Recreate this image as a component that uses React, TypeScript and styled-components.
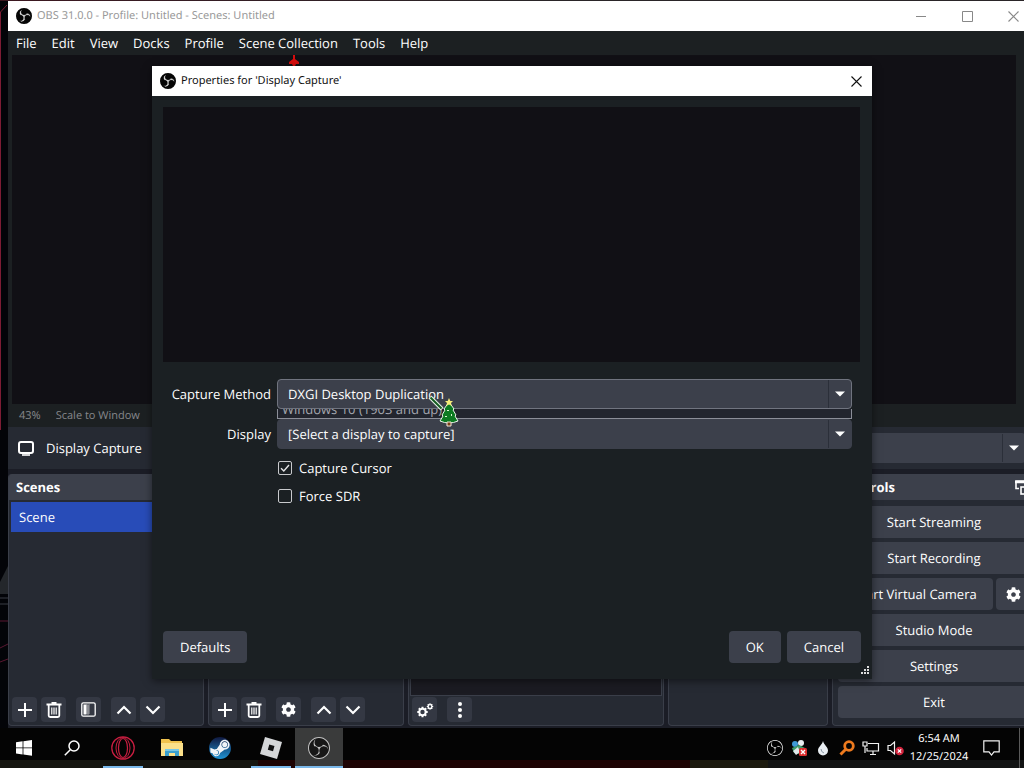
import React from "react";
import styled, { createGlobalStyle } from "styled-components";
import { FaCog, FaSteamSymbol } from "react-icons/fa";
import { SiObsstudio } from "react-icons/si";

const Global = createGlobalStyle`
  * { box-sizing: border-box; }
  body { margin: 0; background: #000; overflow: hidden; text-rendering: geometricPrecision; }
  button, select, input { font: inherit; color: inherit; margin: 0; text-rendering: inherit; }
  button { border: 0; padding: 0; background: none; }
`;

const ui = `"Open Sans", "Noto Sans", sans-serif`;

const Screen = styled.div`
  height: 100vh;
  display: flex;
  flex-direction: column;
  overflow: hidden;
  background: #05060a;
  color: #fefefe;
  font-family: ${ui};
  font-size: 13px;
  line-height: 18px;
`;

const Desktop = styled.div`
  position: relative;
  flex: 1;
  min-height: 0;
  display: flex;
  padding: 1px 0 0 8px;
  background: linear-gradient(90deg, #3c1720, #2a2528 50%) top / 100% 1px no-repeat, #030408;
`;

const Wallpaper = styled.svg`
  position: absolute;
  left: 0;
  top: 0;
  width: 8px;
  height: 100%;
`;

const MainWindow = styled.main`
  flex: 1;
  display: flex;
  flex-direction: column;
  margin-right: -12px;
  background: #1c2022;
`;

const TitleBar = styled.header<{ $active?: boolean }>`
  flex: none;
  height: 30px;
  display: flex;
  align-items: center;
  gap: 5px;
  padding-left: 8px;
  background: #fff;
  color: ${(p) => (p.$active ? "#111" : "#999")};
  font-family: "Noto Sans", sans-serif;
  font-size: 11px;
`;

const WindowTitle = styled.h1`
  flex: 1;
  margin: 0;
  font-size: inherit;
  font-weight: 400;
`;

const CaptionButton = styled.button<{ $w?: number }>`
  width: ${(p) => p.$w ?? 46}px;
  height: 30px;
  display: grid;
  place-items: center;
`;

const CaptionGroup = styled.div`
  display: flex;
`;

const MenuBar = styled.nav`
  flex: none;
  height: 24px;
  display: flex;
  align-items: center;
  gap: 15px;
  padding-left: 8px;
`;

const MenuItem = styled.button``;

const Preview = styled.div`
  flex: 1;
  min-height: 0;
  margin: 0 20px 0 4px;
  background: #111015;
`;

const ZoomRow = styled.div`
  flex: none;
  height: 23px;
  display: flex;
  align-items: center;
  gap: 15px;
  padding-left: 11px;
  color: #85878b;
  font-size: 11px;
`;

const SourceBar = styled.div`
  flex: none;
  height: 42px;
  display: flex;
  align-items: center;
  gap: 12px;
  padding: 0 10px;
  background: #262a33;
`;

const SourceName = styled.span`
  flex: 1;
`;

const Docks = styled.div`
  flex: none;
  display: grid;
  grid-template-columns: 196px 196px 256px 160px 1fr;
  gap: 4px;
  padding: 5px 0 2px;
  background: #1b1d26;
`;

const Dock = styled.section`
  display: flex;
  flex-direction: column;
  border: 1px solid #3a3e49;
  border-top: 0;
  border-radius: 4px;
  overflow: hidden;
  background: #262a33;
`;

const DockHeader = styled.h2`
  flex: none;
  height: 26px;
  display: flex;
  align-items: center;
  justify-content: space-between;
  margin: 0;
  padding: 0 5px 0 7px;
  background: #3c404b;
  font-size: 13px;
  font-weight: 700;
`;

const DockBody = styled.div`
  flex: 1;
  padding: 2px;
`;

const MixerBody = styled.div`
  flex: 1;
  margin: 0 1px -2px;
  border: 1px solid #3a3e49;
  border-top: 0;
  background: #1b1b22;
`;

const SceneItem = styled.button`
  width: 100%;
  height: 30px;
  padding-left: 8px;
  text-align: left;
  background: #284cb8;
`;

const DockTools = styled.div`
  flex: none;
  display: flex;
  gap: 10px;
  padding: 3px 4px 3px 3px;
`;

const ToolGroup = styled.div`
  display: flex;
  gap: 4px;
`;

const ToolButton = styled.button`
  width: 25px;
  height: 25px;
  display: grid;
  place-items: center;
  border-radius: 4px;
  background: #343843;
`;

const Controls = styled.div`
  display: grid;
  gap: 4px;
  padding: 6px 5px 7px;
`;

const ControlRow = styled.div`
  display: grid;
  grid-template-columns: 1fr 34px;
  gap: 3px;
`;

const PushButton = styled.button<{ $pad?: number }>`
  height: 32px;
  padding: 0 ${(p) => p.$pad ?? 0}px;
  display: flex;
  align-items: center;
  justify-content: center;
  border-radius: 4px;
  background: #3c404b;
  white-space: nowrap;
`;

const Dialog = styled.section`
  position: absolute;
  left: 152px;
  right: 152px;
  top: 66px;
  bottom: 49px;
  display: flex;
  flex-direction: column;
  background: #1b2023;
  box-shadow: 0 2px 8px rgba(0, 0, 0, 0.5);
`;

const DialogBody = styled.div`
  flex: 1;
  display: flex;
  flex-direction: column;
  padding: 11px 11px 16px;
`;

const SourcePreview = styled.div`
  flex: none;
  height: 255px;
  margin-right: 1px;
  background: #111015;
`;

const Form = styled.form`
  flex: 1;
  display: grid;
  grid-template-columns: 108px 1fr;
  grid-auto-rows: 30px;
  align-content: start;
  align-items: center;
  column-gap: 6px;
  row-gap: 10px;
  padding: 17px 9px 0 0;
`;

const FieldLabel = styled.label`
  text-align: right;
`;

const Field = styled.div`
  position: relative;
`;

const Combo = styled.span<{ $focus?: boolean }>`
  display: flex;
  align-items: center;
  width: 100%;
  height: 30px;
  border: 1px solid ${(p) => (p.$focus ? "#70747f" : "#3c404b")};
  border-radius: 4px;
  background: #3c404b;
`;

const ComboSelect = styled.select`
  flex: 1;
  height: 100%;
  padding: 0 10px;
  border: 0;
  outline: 0;
  appearance: none;
  background: transparent;
`;

const ComboArrow = styled.span`
  width: 23px;
  height: 100%;
  display: grid;
  place-items: center;
  border-left: 1px solid #2b2f39;
  pointer-events: none;
`;

const Popup = styled.div`
  position: absolute;
  left: 0;
  right: 0;
  top: 30px;
  height: 10px;
  display: flex;
  align-items: flex-end;
  overflow: hidden;
  padding-left: 4px;
  border: 1px solid #8b8e98;
  border-top: 0;
  background: #22252e;
  color: #a4a7af;
`;

const Checks = styled.div`
  grid-column: 2;
  display: grid;
  gap: 10px;
  align-self: start;
`;

const CheckLabel = styled.label`
  display: flex;
  align-items: center;
  gap: 7px;
  padding-left: 1px;
`;

const CheckBox = styled.input`
  appearance: none;
  width: 14px;
  height: 14px;
  border: 1px solid #c9cacd;
  border-radius: 2px;
  &:checked {
    background: url("data:image/svg+xml,%3Csvg xmlns='http://www.w3.org/2000/svg' viewBox='0 0 12 12'%3E%3Cpath d='M2 6.2 4.8 9 10 3' fill='none' stroke='%23e4e4e6' stroke-width='1.4'/%3E%3C/svg%3E") center / 12px no-repeat;
  }
`;

const DialogButtons = styled.footer`
  display: flex;
  gap: 6px;
`;

const Spacer = styled.span`
  flex: 1;
`;

const Grip = styled.svg`
  position: absolute;
  right: 3px;
  bottom: 5px;
`;

const Cursor = styled.svg`
  position: absolute;
  left: 428px;
  top: 394px;
`;

const Marker = styled.svg`
  position: absolute;
  left: 288px;
  top: 55px;
`;

const Taskbar = styled.footer`
  flex: none;
  height: 40px;
  display: flex;
  align-items: stretch;
  background: linear-gradient(90deg, #15150f 0 258px, #1d0303 258px 690px, #1b190d 690px 768px, #121313 768px) bottom / 100% 8px no-repeat, #040404;
`;

const Task = styled.button<{ $w: number; $line?: number; $active?: boolean }>`
  width: ${(p) => p.$w}px;
  display: grid;
  place-items: center;
  background: ${(p) => (p.$line ? `linear-gradient(#7ab8ea, #7ab8ea) bottom / ${p.$line}px 2px no-repeat` : "none")}
    ${(p) => (p.$active ? ", #3a3b3b" : "")};
`;

const Tray = styled.div`
  display: flex;
  align-items: center;
  gap: 4px;
  margin-left: auto;
  padding-right: 18px;
`;

const TrayButton = styled.button`
  width: 20px;
  height: 40px;
  display: grid;
  place-items: center;
`;

const Clock = styled.time`
  width: 60px;
  margin-right: 8px;
  text-align: center;
  white-space: nowrap;
  font-family: "Noto Sans", sans-serif;
  font-size: 11px;
  line-height: 18px;
`;

const ShowDesktop = styled.button`
  width: 5px;
  border-left: 1px solid #5a5a5a;
`;

const Obs = ({ size, disc, ink, rim }: { size: number; disc: string; ink: string; rim?: boolean }) => (
  <svg width={size} height={size} viewBox="0 0 24 24" aria-hidden>
    <circle cx="12" cy="12" r="11.500" fill={disc} />
    <SiObsstudio size={24} color={ink} stroke={ink} strokeWidth={rim ? 0.6 : 0} />
    {rim && <circle cx="12" cy="12" r="10.700" fill="none" stroke={disc} strokeWidth="2.600" />}
  </svg>
);

const Cross = ({ color }: { color: string }) => (
  <svg width="11" height="11" viewBox="0 0 11 11">
    <path d="M.5.5l10 10M10.500.5l-10 10" stroke={color} strokeWidth="1.100" />
  </svg>
);

const Plus = () => (
  <svg width="14" height="14" viewBox="0 0 14 14">
    <path d="M7 0v14M0 7h14" stroke="#fefefe" strokeWidth="2" />
  </svg>
);

const Trash = () => (
  <svg width="16" height="16" viewBox="0 0 16 16" fill="none" stroke="#fefefe">
    <path d="M.5 2.500h15M5.500 1h5" strokeWidth="2" />
    <path d="M2.700 3v10.500q0 1.500 1.500 1.500h7.600q1.500 0 1.500-1.500V3" strokeWidth="1.800" />
    <path d="M5.800 5.500v7M8 5.500v7M10.200 5.500v7" strokeWidth="1.200" />
  </svg>
);

const Filters = () => (
  <svg width="15" height="15" viewBox="0 0 15 15">
    <rect x=".8" y=".8" width="13.400" height="13.400" rx="1.500" fill="none" stroke="#fefefe" strokeWidth="1.300" />
    <path d="M2.500 2.500h3v10h-3z" fill="#fefefe" />
    <path d="M6 2.500v10M8 2.500v10" stroke="#fefefe" strokeDasharray="1 1" />
    <path d="M7 3.500v9" stroke="#fefefe" strokeDasharray="1 1" />
  </svg>
);

const Chevron = ({ up }: { up?: boolean }) => (
  <svg width="16" height="10" viewBox="0 0 16 10">
    <path d={up ? "M1.500 8.500 8 2l6.500 6.500" : "M1.500 1.500 8 8l6.500-6.500"} fill="none" stroke="#fefefe" strokeWidth="2.200" />
  </svg>
);

const Arrow = () => (
  <svg width="10" height="6" viewBox="0 0 10 6">
    <path d="M0 .5h10L5 5.500z" fill="#fefefe" />
  </svg>
);

const gearTeeth = [0, 45, 90, 135, 180, 225, 270, 315];

const Gears = () => (
  <svg width="18" height="18" viewBox="0 0 18 18" fill="none" stroke="#fefefe">
    <circle cx="6.500" cy="11" r="3.200" strokeWidth="2" />
    {gearTeeth.map((a) => (
      <path key={a} d="M6.500 5.800v2" strokeWidth="2" transform={`rotate(${a} 6.500 11)`} />
    ))}
    <circle cx="14" cy="5.500" r="1.900" strokeWidth="1.300" />
    {gearTeeth.map((a) => (
      <path key={a} d="M14 2.300v1.500" strokeWidth="1.200" transform={`rotate(${a} 14 5.500)`} />
    ))}
  </svg>
);

const Kebab = () => (
  <svg width="4" height="16" viewBox="0 0 4 16" fill="#fefefe">
    <circle cx="2" cy="2" r="2" />
    <circle cx="2" cy="8" r="2" />
    <circle cx="2" cy="14" r="2" />
  </svg>
);

const OrderButtons = () => (
  <ToolGroup>
    <ToolButton aria-label="Move up"><Chevron up /></ToolButton>
    <ToolButton aria-label="Move down"><Chevron /></ToolButton>
  </ToolGroup>
);

const AddRemove = () => (
  <ToolGroup>
    <ToolButton aria-label="Add"><Plus /></ToolButton>
    <ToolButton aria-label="Remove"><Trash /></ToolButton>
  </ToolGroup>
);

const menus = ["File", "Edit", "View", "Docks", "Profile", "Scene Collection", "Tools", "Help"];

export default function App() {
  return (
    <Screen>
      <Global />
      <Desktop>
        <Wallpaper viewBox="0 0 8 728" preserveAspectRatio="none" aria-hidden>
          <path d="M.5 430V12L7 5" fill="none" stroke="#7c1c33" />
          <path d="M0 582l8-16v28H0z" fill="#24272b" />
          <path d="M0 598h8M0 604h8" stroke="#3a3c44" />
          <path d="M0 621h8M0 648l8-4M0 662l8-3" stroke="#5a1730" />
        </Wallpaper>

        <MainWindow>
          <TitleBar>
            <Obs size={16} disc="#050505" ink="#f4f4f4" rim />
            <WindowTitle>OBS 31.0.0 - Profile: Untitled - Scenes: Untitled</WindowTitle>
            <CaptionGroup>
              <CaptionButton aria-label="Minimize">
                <svg width="10" height="1"><path d="M0 .5h10" stroke="#888" /></svg>
              </CaptionButton>
              <CaptionButton aria-label="Maximize">
                <svg width="11" height="11"><path d="M.5.5h10v10H.5z" fill="none" stroke="#888" /></svg>
              </CaptionButton>
              <CaptionButton aria-label="Close"><Cross color="#888" /></CaptionButton>
            </CaptionGroup>
          </TitleBar>
          <MenuBar>
            {menus.map((m) => <MenuItem key={m}>{m}</MenuItem>)}
          </MenuBar>
          <Preview />
          <ZoomRow>
            <span>43%</span>
            <span>Scale to Window</span>
          </ZoomRow>
          <SourceBar>
            <svg width="16" height="15" viewBox="0 0 16 15" fill="none" stroke="#fefefe">
              <rect x="1" y="1" width="14" height="11" rx="2" strokeWidth="2" />
              <path d="M4 14h8" strokeWidth="1.600" />
            </svg>
            <SourceName>Display Capture</SourceName>
            <SourceName>
              <Combo>
                <ComboSelect aria-label="Display"><option></option></ComboSelect>
                <ComboArrow><Arrow /></ComboArrow>
              </Combo>
            </SourceName>
          </SourceBar>
          <Docks>
            <Dock>
              <DockHeader>Scenes</DockHeader>
              <DockBody><SceneItem>Scene</SceneItem></DockBody>
              <DockTools>
                <AddRemove />
                <ToolButton aria-label="Filters"><Filters /></ToolButton>
                <OrderButtons />
              </DockTools>
            </Dock>
            <Dock>
              <DockHeader>Sources</DockHeader>
              <DockBody />
              <DockTools>
                <AddRemove />
                <ToolButton aria-label="Source properties"><FaCog size={15} /></ToolButton>
                <OrderButtons />
              </DockTools>
            </Dock>
            <Dock>
              <DockHeader>Audio Mixer</DockHeader>
              <MixerBody />
              <DockTools>
                <ToolButton aria-label="Advanced audio"><Gears /></ToolButton>
                <ToolButton aria-label="Mixer menu"><Kebab /></ToolButton>
              </DockTools>
            </Dock>
            <Dock>
              <DockHeader>Scene Transitions</DockHeader>
            </Dock>
            <Dock>
              <DockHeader>
                Controls
                <svg width="15" height="15" viewBox="0 0 15 15" fill="none" stroke="#fefefe">
                  <path d="M4 8.500H1V1h11v4" strokeWidth="1.600" />
                  <path d="M0 2h13" strokeWidth="2.500" />
                  <rect x="6" y="7" width="8" height="7" strokeWidth="1.600" />
                </svg>
              </DockHeader>
              <Controls>
                <PushButton>Start Streaming</PushButton>
                <PushButton>Start Recording</PushButton>
                <ControlRow>
                  <PushButton>Start Virtual Camera</PushButton>
                  <PushButton aria-label="Virtual camera settings"><FaCog size={15} /></PushButton>
                </ControlRow>
                <PushButton>Studio Mode</PushButton>
                <PushButton>Settings</PushButton>
                <PushButton>Exit</PushButton>
              </Controls>
            </Dock>
          </Docks>
        </MainWindow>

        <Marker width="12" height="11" viewBox="0 0 12 11" aria-hidden>
          <path d="M5 0h2v4l4 3v2H8l-1 2H5L4 9H1V7l4-3z" fill="#d80d0d" />
        </Marker>

        <Dialog role="dialog" aria-label="Properties for 'Display Capture'">
          <TitleBar $active>
            <Obs size={16} disc="#050505" ink="#f4f4f4" rim />
            <WindowTitle>Properties for 'Display Capture'</WindowTitle>
            <CaptionButton $w={31} aria-label="Close dialog"><Cross color="#111" /></CaptionButton>
          </TitleBar>
          <DialogBody>
            <SourcePreview />
            <Form>
              <FieldLabel htmlFor="method">Capture Method</FieldLabel>
              <Field>
                <Combo $focus>
                  <ComboSelect id="method"><option>DXGI Desktop Duplication</option></ComboSelect>
                  <ComboArrow><Arrow /></ComboArrow>
                </Combo>
                <Popup>Windows 10 (1903 and up)</Popup>
              </Field>
              <FieldLabel htmlFor="display">Display</FieldLabel>
              <Field>
                <Combo>
                  <ComboSelect id="display"><option>[Select a display to capture]</option></ComboSelect>
                  <ComboArrow><Arrow /></ComboArrow>
                </Combo>
              </Field>
              <Checks>
                <CheckLabel><CheckBox type="checkbox" defaultChecked />Capture Cursor</CheckLabel>
                <CheckLabel><CheckBox type="checkbox" />Force SDR</CheckLabel>
              </Checks>
            </Form>
            <DialogButtons>
              <PushButton $pad={17}>Defaults</PushButton>
              <Spacer />
              <PushButton $pad={17}>OK</PushButton>
              <PushButton $pad={17}>Cancel</PushButton>
            </DialogButtons>
          </DialogBody>
          <Grip width="8" height="8" fill="#dcdcdc" aria-hidden>
            <path d="M6 0h2v2H6zM3 3h2v2H3zM6 3h2v2H6zM0 6h2v2H0zM3 6h2v2H3zM6 6h2v2H6z" />
          </Grip>
        </Dialog>

        <Cursor width="32" height="34" viewBox="0 0 32 34" aria-hidden>
          <path d="M2 3l12 12" stroke="#e6f5e6" strokeWidth="4" />
          <path d="M2.500 3.500l11 11" stroke="#155c22" strokeWidth="2" />
          <path d="M21 8l5 7-1 1 3 5-1 1 3 5q-9 4-18 0l3-5-1-1 3-5-1-1z" fill="#0d7a22" stroke="#e6f5e6" strokeWidth="1" />
          <path d="M19 28h4v4h-4z" fill="#7a3f17" stroke="#f1e6d8" strokeWidth="1" />
          <path d="M21 4l1.300 3h2.700l-2 2 .7 3-2.700-1.600L18.300 12l.7-3-2-2h2.700z" fill="#f6ec7a" />
          <path d="M19 16h2v1h-2zM23 20h1v2h-1zM17 22h2v1h-2z" fill="#d8f5d0" />
        </Cursor>
      </Desktop>

      <Taskbar>
        <Task $w={48} aria-label="Start">
          <svg width="16" height="16" viewBox="0 0 16 16" fill="#fff">
            <path d="M0 2.200l6.600-.9v6.200H0zM7.400 1.200 16 0v7.500H7.400zM0 8.300h6.600v6.200L0 13.600zM7.400 8.300H16v7.500l-8.600-1.200z" />
          </svg>
        </Task>
        <Task $w={48} aria-label="Search">
          <svg width="16" height="16" viewBox="0 0 16 16" fill="none" stroke="#fff" strokeWidth="1.500">
            <circle cx="10" cy="6" r="5" />
            <path d="M6.300 9.700.8 15.200" />
          </svg>
        </Task>
        <Task $w={54} $line={40} aria-label="Opera GX">
          <svg width="24" height="24" viewBox="0 0 24 24" fill="none" stroke="#c81e40">
            <circle cx="12" cy="12" r="11.200" strokeWidth="1.300" />
            <ellipse cx="12" cy="12" rx="4.500" ry="9.500" strokeWidth="1.200" />
            <ellipse cx="12" cy="12" rx="7" ry="10.500" strokeWidth="1" />
          </svg>
        </Task>
        <Task $w={44} aria-label="File Explorer">
          <svg width="22" height="20" viewBox="0 0 22 20">
            <path d="M0 1h8l2 2h11v15H0z" fill="#f0c24e" />
            <path d="M0 5h22v13H0z" fill="#fbe08a" />
            <path d="M4 18v-7h14v7h-4v-3H8v3z" fill="#3ba0cf" />
            <path d="M4 11h14v2H4z" fill="#78c7e6" />
          </svg>
        </Task>
        <Task $w={52} aria-label="Steam">
          <svg width="22" height="22" viewBox="0 0 22 22">
            <defs>
              <linearGradient id="steam" x2="0" y2="1">
                <stop stopColor="#10183f" />
                <stop offset="1" stopColor="#1f93d4" />
              </linearGradient>
              <clipPath id="steam-disc"><circle cx="11" cy="11" r="11" /></clipPath>
            </defs>
            <circle cx="11" cy="11" r="11" fill="url(#steam)" />
            <g clipPath="url(#steam-disc)">
              <FaSteamSymbol size={22} color="#f2f5f8" />
            </g>
          </svg>
        </Task>
        <Task $w={49} $line={40} aria-label="Roblox">
          <svg width="22" height="22" viewBox="0 0 22 22">
            <path d="M5 0l17 5-5 17L0 17z" fill="#d5d7d9" />
            <path d="M9.300 7.600l5.200 1.400-1.500 5.200-5.200-1.400z" fill="#101112" />
          </svg>
        </Task>
        <Task $w={48} $line={48} $active aria-label="OBS Studio">
          <Obs size={22} disc="#171717" ink="#c4c4c4" />
        </Task>
        <Tray>
          <TrayButton aria-label="OBS">
            <Obs size={16} disc="#000" ink="#f0f0f0" />
          </TrayButton>
          <TrayButton aria-label="Sync status">
            <svg width="16" height="16" viewBox="0 0 16 16">
              <circle cx="4" cy="4" r="3" fill="#3f9ad6" />
              <circle cx="10" cy="3" r="3" fill="#e8eef0" />
              <path d="M1 8l7-3 6 3-5 6-6-1z" fill="#3f9d6a" />
              <path d="M2 11l5-4 2 5-4 3z" fill="#dfe7ea" />
              <rect x="8" y="8" width="8" height="8" rx="1.500" fill="#dc2f2f" />
              <path d="M10 10l4 4M14 10l-4 4" stroke="#fff" strokeWidth="1.400" />
            </svg>
          </TrayButton>
          <TrayButton aria-label="Rainmeter">
            <svg width="12" height="16" viewBox="0 0 12 16">
              <path d="M6 1c1 4 5 6 5 9.500a5 5 0 0 1-10 0C1 7 5 5 6 1z" fill="#e9eef2" />
              <path d="M4 9q0 3 3 4" stroke="#8b98a5" fill="none" />
            </svg>
          </TrayButton>
          <TrayButton aria-label="Search tool">
            <svg width="16" height="16" viewBox="0 0 16 16" fill="none" stroke="#ee7a1e">
              <circle cx="10" cy="6" r="4.300" strokeWidth="2.800" />
              <path d="M6.500 9.500 1.500 14.500" strokeWidth="3" />
            </svg>
          </TrayButton>
          <TrayButton aria-label="Network">
            <svg width="18" height="16" viewBox="0 0 18 16" fill="none" stroke="#f2f2f2" strokeWidth="1.200">
              <path d="M6 3.500h10.500v7.500H5V8M8 14.500h6M11 11v3.500" />
              <path d="M1 2h4v4H1zM3 6v7" />
            </svg>
          </TrayButton>
          <TrayButton aria-label="Volume">
            <svg width="17" height="16" viewBox="0 0 17 16">
              <path d="M1 5.500h2.500L7.500 2v12l-4-3.500H1z" fill="none" stroke="#f2f2f2" strokeWidth="1.200" />
              <circle cx="12.500" cy="11" r="4.300" fill="#d2233c" />
              <path d="M10.800 9.300l3.400 3.400M14.200 9.300l-3.400 3.400" stroke="#fff" strokeWidth="1.200" />
            </svg>
          </TrayButton>
          <Clock>6:54 AM<br />12/25/2024</Clock>
          <TrayButton aria-label="Notifications">
            <svg width="17" height="16" viewBox="0 0 17 16" fill="none" stroke="#f2f2f2" strokeWidth="1.200">
              <path d="M.8.8h15.400v11h-5.200L8.500 15 6 11.800H.8z" />
            </svg>
          </TrayButton>
        </Tray>
        <ShowDesktop aria-label="Show desktop" />
      </Taskbar>
    </Screen>
  );
}
